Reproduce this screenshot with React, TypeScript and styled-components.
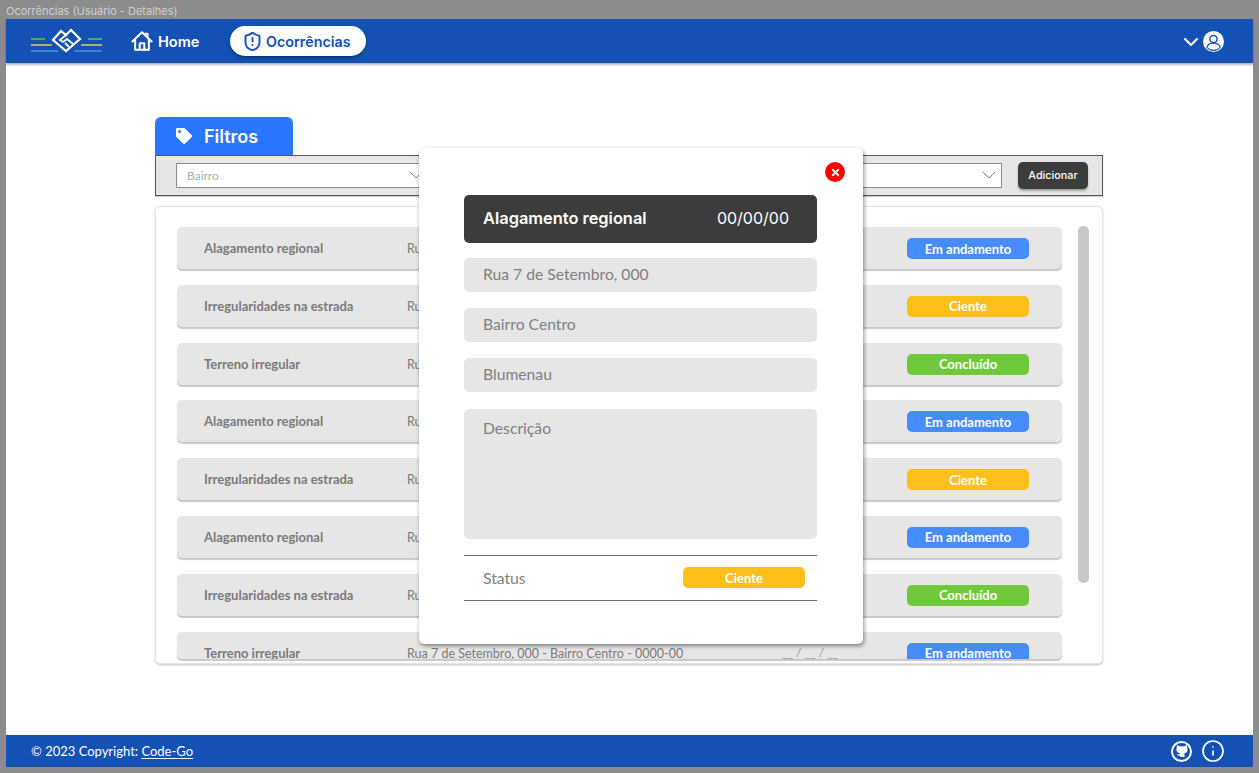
import styled, { createGlobalStyle } from 'styled-components';
import { ChevronDown, Info, ShieldAlert, X } from 'lucide-react';
import { FaTag } from 'react-icons/fa';

type Status = 'andamento' | 'ciente' | 'concluido';

const statusColors: Record<Status, string> = {
  andamento: '#478cff',
  ciente: '#ffbf1a',
  concluido: '#70c93a',
};

const statusLabels: Record<Status, string> = {
  andamento: 'Em andamento',
  ciente: 'Ciente',
  concluido: 'Concluído',
};

const rows: { title: string; status: Status }[] = [
  { title: 'Alagamento regional', status: 'andamento' },
  { title: 'Irregularidades na estrada', status: 'ciente' },
  { title: 'Terreno irregular', status: 'concluido' },
  { title: 'Alagamento regional', status: 'andamento' },
  { title: 'Irregularidades na estrada', status: 'ciente' },
  { title: 'Alagamento regional', status: 'andamento' },
  { title: 'Irregularidades na estrada', status: 'concluido' },
  { title: 'Terreno irregular', status: 'andamento' },
];

function Logo() {
  return (
    <svg width="72" height="26" viewBox="0 0 72 26" fill="none">
      <path d="M0 11h14M57 11h14" stroke="#6fbf3f" strokeWidth="1.6" />
      <path d="M0 17h21M50 17h21" stroke="#e8d53a" strokeWidth="1.6" />
      <path d="M0 23h27M43 23h28" stroke="#4d90e8" strokeWidth="1.6" />
      <path
        d="M22 12 L30 3 L35 7 L40 2 L49 11 L35 23 Z"
        stroke="#fff"
        strokeWidth="2.2"
        strokeLinejoin="miter"
      />
      <path
        d="M35 7 L29 12 L32 14 L36 11 L42 16 M34 15 L38 19"
        stroke="#fff"
        strokeWidth="1.8"
      />
    </svg>
  );
}

function HomeIcon() {
  return (
    <svg width="22" height="22" viewBox="0 0 24 24" fill="none" stroke="#fff" strokeWidth="2.2" strokeLinejoin="round" strokeLinecap="round">
      <path d="M1.5 12.5 L12 2.5 L22.5 12.5" />
      <path d="M18 8 V4 H15.5" />
      <path d="M4.5 10.5 V21.5 H19.5 V10.5" />
      <path d="M9.5 21.5 V14.5 H14.5 V21.5" />
    </svg>
  );
}

function UserIcon() {
  return (
    <svg width="21" height="21" viewBox="0 0 21 21">
      <circle cx="10.5" cy="10.5" r="10.5" fill="#fff" />
      <circle cx="10.5" cy="8" r="3.6" fill="#fff" stroke="#1351b4" strokeWidth="1.5" />
      <path d="M4 16.5 C4.5 13 7 12.2 10.5 12.2 C14 12.2 16.5 13 17 16.5 C15.5 18.4 13 19.4 10.5 19.4 C8 19.4 5.5 18.4 4 16.5 Z" fill="#fff" stroke="#1351b4" strokeWidth="1.2" />
    </svg>
  );
}

function CatIcon() {
  return (
    <svg width="14" height="14" viewBox="0 0 14 14" fill="#fff">
      <path d="M2.5 1 L5 2.4 C6 2.1 8 2.1 9 2.4 L11.5 1 C12.2 2.4 12.6 3.6 12.5 5 C13 7.4 11.4 9 9.4 9.3 L9.6 13 H5.2 L5.2 11.6 C3.8 11.8 2.6 11.6 1.4 10.2 C2.6 10.4 3.8 10.6 5 10 C5 9.7 5 9.5 5.1 9.3 C3 9 1 7.4 1.5 5 C1.4 3.6 1.8 2.4 2.5 1 Z" />
    </svg>
  );
}

export default function App() {
  return (
    <>
      <GlobalStyle />
      <Frame>
        <WindowTitle>Ocorrências (Usuário - Detalhes)</WindowTitle>
        <Window>
          <Header>
            <Nav>
              <LogoBox>
                <Logo />
              </LogoBox>
              <NavLink>
                <HomeIcon />
                Home
              </NavLink>
              <ActiveNavLink>
                <ShieldAlert size={21} strokeWidth={2.2} />
                Ocorrências
              </ActiveNavLink>
            </Nav>
            <UserMenu>
              <ChevronDown size={24} strokeWidth={2} />
              <UserIcon />
            </UserMenu>
          </Header>

          <Main>
            <FilterSection>
              <FilterTab>
                <FaTag size={16} />
                Filtros
              </FilterTab>
              <FilterBar>
                <Select>
                  Bairro
                  <ChevronDown size={24} strokeWidth={1} />
                </Select>
                <Select>
                  Rua
                  <ChevronDown size={24} strokeWidth={1} />
                </Select>
                <Select>
                  Status
                  <ChevronDown size={24} strokeWidth={1} />
                </Select>
                <AddButton>Adicionar</AddButton>
              </FilterBar>
            </FilterSection>

            <ListPanel>
              <List>
                {rows.map((row, i) => (
                  <Row key={i} $clipped={i === rows.length - 1}>
                    <RowTitle>{row.title}</RowTitle>
                    <RowAddress>Rua 7 de Setembro, 000 - Bairro Centro - 0000-00</RowAddress>
                    <RowDate>__ / __ / __</RowDate>
                    <RowPill $status={row.status}>{statusLabels[row.status]}</RowPill>
                  </Row>
                ))}
              </List>
              <Scrollbar />
            </ListPanel>
          </Main>

          <Footer>
            <span>
              © 2023 Copyright: <FooterLink>Code-Go</FooterLink>
            </span>
            <FooterIcons>
              <FooterIcon>
                <CatIcon />
              </FooterIcon>
              <Info size={24} strokeWidth={1.7} />
            </FooterIcons>
          </Footer>
        </Window>

        <Modal>
          <CloseButton>
            <X size={11} strokeWidth={4} />
          </CloseButton>
          <ModalHeader>
            <ModalTitle>Alagamento regional</ModalTitle>
            <ModalDate>00/00/00</ModalDate>
          </ModalHeader>
          <Field>Rua 7 de Setembro, 000</Field>
          <Field>Bairro Centro</Field>
          <Field>Blumenau</Field>
          <Description>Descrição</Description>
          <StatusRow>
            Status
            <Pill $status="ciente">Ciente</Pill>
          </StatusRow>
        </Modal>
      </Frame>
    </>
  );
}

const GlobalStyle = createGlobalStyle`
  html, body {
    margin: 0;
    height: 100%;
    overflow: hidden;
    background: #8c8c8c;
    font-family: 'Lato', 'Noto Sans', sans-serif;
  }
`;

const Frame = styled.div`
  position: relative;
  width: 1259px;
  height: 773px;
  padding: 0 6px 6px;
  box-sizing: border-box;
  display: flex;
  flex-direction: column;
`;

const WindowTitle = styled.div`
  height: 19px;
  line-height: 22px;
  font-family: 'Inter', sans-serif;
  font-size: 11px;
  color: #d0d0d0;
`;

const Window = styled.div`
  flex: 1;
  display: flex;
  flex-direction: column;
  background: #fff;
`;

const Header = styled.header`
  height: 44px;
  flex-shrink: 0;
  display: flex;
  align-items: center;
  justify-content: space-between;
  padding: 0 29px 0 25px;
  background: #1351b4;
  box-shadow: 0 2px 2px rgba(0, 0, 0, 0.3);
`;

const Nav = styled.nav`
  display: flex;
  align-items: center;
`;

const LogoBox = styled.div`
  display: flex;
  width: 100px;
`;

const NavLink = styled.a`
  display: flex;
  align-items: center;
  gap: 5px;
  width: 99px;
  font-family: 'Inter', sans-serif;
  font-size: 14.5px;
  font-weight: 600;
  color: #fff;
`;

const ActiveNavLink = styled.a`
  display: flex;
  align-items: center;
  gap: 3px;
  height: 30px;
  padding: 0 15px 0 12px;
  border-radius: 15px;
  background: #fff;
  box-shadow: 0 2px 3px rgba(0, 0, 0, 0.35);
  font-family: 'Inter', sans-serif;
  font-size: 14.3px;
  font-weight: 600;
  color: #1351b4;
`;

const UserMenu = styled.div`
  display: flex;
  align-items: center;
  gap: 0;
  margin-top: 1px;
  color: #fff;
`;

const Main = styled.main`
  flex: 1;
  display: flex;
  flex-direction: column;
  padding: 54px 150px 0 149px;
`;

const FilterSection = styled.section`
  display: flex;
  flex-direction: column;
  align-items: flex-start;
`;

const FilterTab = styled.div`
  width: 138px;
  height: 38px;
  box-sizing: border-box;
  display: flex;
  align-items: center;
  gap: 12px;
  padding: 0 0 0 21px;
  border-radius: 6px 6px 0 0;
  background: #2a76ff;
  font-family: 'Inter', sans-serif;
  font-size: 18px;
  font-weight: 600;
  color: #fff;
`;

const FilterBar = styled.div`
  align-self: stretch;
  height: 41px;
  box-sizing: border-box;
  display: flex;
  align-items: center;
  gap: 33px;
  padding: 0 14px 0 20px;
  border: 1px solid #555;
  background: #e6e6e6;
  box-shadow: 0 1px 1px rgba(0, 0, 0, 0.2);
`;

const Select = styled.div`
  flex: 1;
  height: 25px;
  box-sizing: border-box;
  display: flex;
  align-items: center;
  justify-content: space-between;
  padding: 0 0 1px 10px;
  border: 1px solid #8a8a8a;
  background: #fff;
  font-size: 12px;
  color: #b0b0b0;

  svg {
    color: #888;
  }
`;

const AddButton = styled.button`
  flex-shrink: 0;
  margin-left: -17px;
  width: 70px;
  height: 27px;
  padding: 0;
  border: 0;
  border-radius: 5px;
  background: #3c3c3c;
  box-shadow: 0 2px 2px rgba(0, 0, 0, 0.3);
  font-family: 'Inter', sans-serif;
  font-size: 10.8px;
  font-weight: 500;
  color: #fff;
`;

const ListPanel = styled.section`
  position: relative;
  height: 458px;
  box-sizing: border-box;
  margin-top: 10px;
  padding: 20px 0 0 21px;
  border: 1px solid #e4e4e4;
  border-radius: 5px;
  background: #fff;
  box-shadow: 0 1px 2px rgba(0, 0, 0, 0.25);
`;

const List = styled.div`
  width: 885px;
  display: flex;
  flex-direction: column;
  gap: 15.8px;
`;

const Row = styled.div<{ $clipped?: boolean }>`
  height: ${p => (p.$clipped ? '27px' : '42px')};
  flex-shrink: 0;
  overflow: hidden;
  display: flex;
  align-items: flex-start;
  padding-left: 27px;
  border-radius: 5px;
  background: #e6e6e6;
  box-shadow: 0 2px 1px rgba(0, 0, 0, 0.22);
  color: #7a7a7a;
`;

const RowTitle = styled.div`
  width: 203px;
  margin-top: 12px;
  line-height: 18px;
  font-size: 13px;
  font-weight: 700;
`;

const RowAddress = styled.div`
  width: 375px;
  margin-top: 12px;
  line-height: 20px;
  font-size: 12.5px;
`;

const RowDate = styled.div`
  width: 125px;
  margin-top: 11px;
  line-height: 20px;
  font-size: 12px;
  color: #909090;
`;

const Pill = styled.div<{ $status: Status }>`
  width: 122px;
  height: 21px;
  flex-shrink: 0;
  display: flex;
  align-items: center;
  justify-content: center;
  border-radius: 5px;
  background: ${p => statusColors[p.$status]};
  font-size: 13px;
  font-weight: 700;
  color: #fff;
`;

const RowPill = styled(Pill)`
  margin-top: 11px;
`;

const Scrollbar = styled.div`
  position: absolute;
  top: 19px;
  right: 13px;
  width: 11px;
  height: 357px;
  border-radius: 6px;
  background: #c8c8c8;
`;

const Footer = styled.footer`
  height: 32px;
  flex-shrink: 0;
  display: flex;
  align-items: center;
  justify-content: space-between;
  padding: 0 28px 0 25px;
  background: #1351b4;
  font-size: 13px;
  color: #fff;
`;

const FooterLink = styled.a`
  text-decoration: underline;
  text-underline-offset: 2px;
`;

const FooterIcons = styled.div`
  display: flex;
  align-items: center;
  gap: 9px;
  color: #fff;
`;

const FooterIcon = styled.span`
  width: 17px;
  height: 17px;
  display: flex;
  align-items: center;
  justify-content: center;
  border: 2px solid #fff;
  border-radius: 50%;
`;

const Modal = styled.div`
  position: absolute;
  left: 419px;
  top: 148px;
  width: 444px;
  height: 496px;
  box-sizing: border-box;
  display: flex;
  flex-direction: column;
  padding: 47px 46px 0 45px;
  border-radius: 5px;
  background: #fff;
  box-shadow: 1px 2px 4px rgba(0, 0, 0, 0.45);
`;

const CloseButton = styled.button`
  position: absolute;
  top: 14px;
  right: 18px;
  width: 20px;
  height: 20px;
  padding: 0;
  display: flex;
  align-items: center;
  justify-content: center;
  border: 0;
  border-radius: 50%;
  background: #f00;
  color: #fff;
`;

const ModalHeader = styled.div`
  height: 48px;
  box-sizing: border-box;
  display: flex;
  align-items: center;
  justify-content: space-between;
  padding: 0 28px 2px 19px;
  border-radius: 5px;
  background: #3c3c3c;
  color: #fff;
  font-family: 'Inter', sans-serif;
`;

const ModalTitle = styled.div`
  font-size: 16.4px;
  font-weight: 600;
`;

const ModalDate = styled.div`
  font-size: 16px;
`;

const Field = styled.div`
  height: 33.5px;
  box-sizing: border-box;
  margin-top: 16.5px;
  display: flex;
  align-items: center;
  padding: 0 0 2px 19px;
  border-radius: 5px;
  background: #e6e6e6;
  font-size: 15.7px;
  color: #7f7f7f;

  ${ModalHeader} + & {
    margin-top: 15px;
  }
`;

const Description = styled.div`
  height: 130px;
  box-sizing: border-box;
  margin-top: 17px;
  padding: 10px 19px;
  border-radius: 5px;
  background: #e6e6e6;
  font-size: 15.7px;
  color: #7f7f7f;
`;

const StatusRow = styled.div`
  height: 44px;
  margin-top: 16px;
  display: flex;
  align-items: center;
  justify-content: space-between;
  padding: 0 12px 0 19px;
  border-top: 1px solid #707070;
  border-bottom: 1px solid #707070;
  font-size: 15.7px;
  color: #7f7f7f;
`;
